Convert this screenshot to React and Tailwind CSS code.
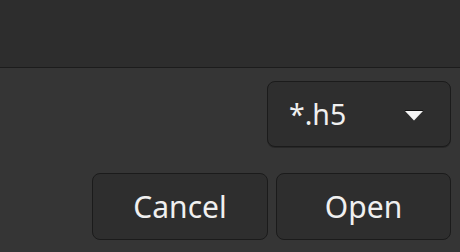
export default function App() {
  return (
    <div
      className="w-[460px] h-[252px] bg-[#353535] text-[#f0f0f0] overflow-hidden"
      style={{ fontFamily: '"Noto Sans", "Open Sans", sans-serif' }}
    >
      {/* header strip */}
      <div className="h-[68px] bg-[#2d2d2d] border-b border-[#1c1c1c]" />

      <div className="flex flex-col items-end pr-[9px] pt-[13px]">
        {/* file filter dropdown */}
        <button className="w-[184px] h-[66px] flex items-center justify-between pl-[21px] pr-[27px] rounded-[8px] border border-[#1b1b1b] bg-[#2e2e2e] text-[28.5px] shadow-[0_1px_0_rgba(0,0,0,0.25)]">
          <span className="leading-none">*.h5</span>
          <svg width="18" height="11" viewBox="0 0 18 11" className="mt-[2px]">
            <path d="M0 0.5 H18" stroke="#111" strokeWidth="1.2" />
            <path d="M0 1 L18 1 L9 10.5 Z" fill="#f4f4f4" />
          </svg>
        </button>

        {/* actions */}
        <div className="flex gap-[8px] mt-[26px]">
          <button className="w-[176px] h-[67px] rounded-[8px] border border-[#1b1b1b] bg-[#2e2e2e] text-[30px] leading-none">
            Cancel
          </button>
          <button className="w-[175px] h-[67px] rounded-[8px] border border-[#1b1b1b] bg-[#2e2e2e] text-[30px] leading-none">
            Open
          </button>
        </div>
      </div>
    </div>
  );
}
